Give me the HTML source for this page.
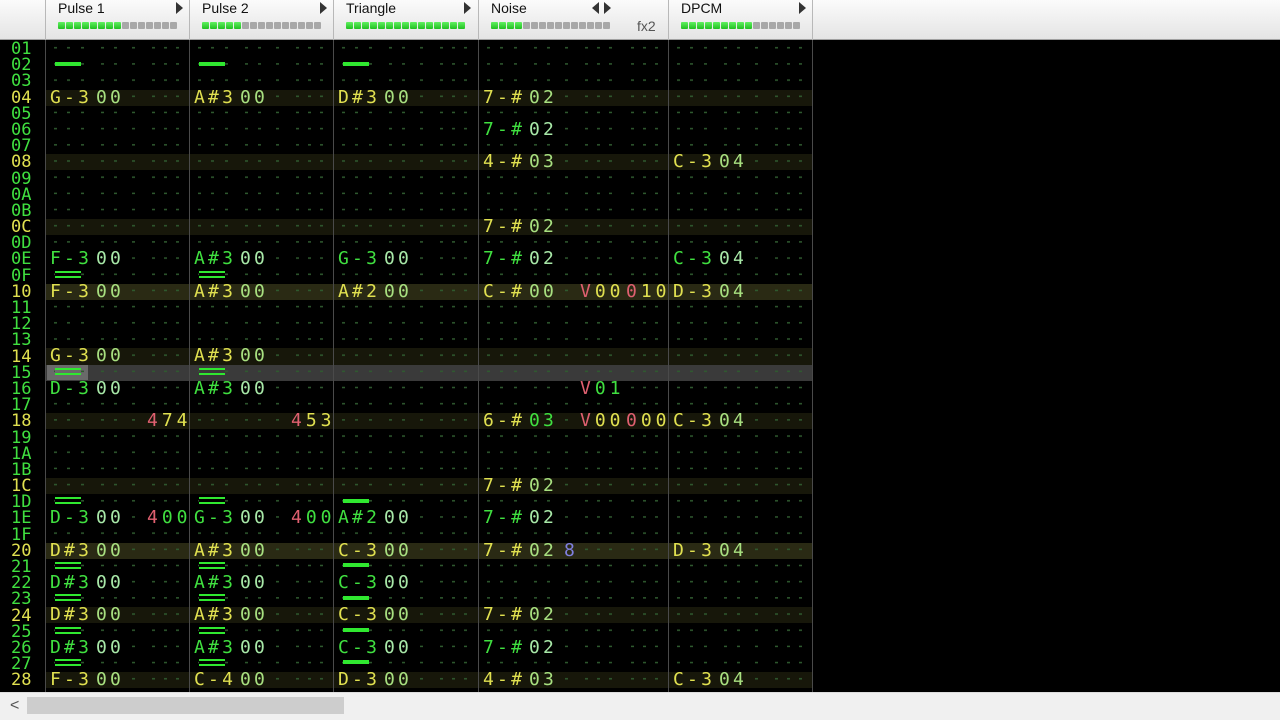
<!DOCTYPE html>
<html><head><meta charset="utf-8"><style>
*{margin:0;padding:0;box-sizing:border-box}
body{width:1280px;height:720px;background:#000;position:relative;overflow:hidden;font-family:"DejaVu Sans Mono","Liberation Mono",monospace}
#hdr{position:absolute;left:0;top:0;width:1280px;height:40px;background:linear-gradient(#fbfbfb,#e4e4e4);border-bottom:1px solid #a0a0a0}
.hc{position:absolute;top:0;height:40px;border-right:1px solid #b8b8b8;font-family:"Liberation Sans",sans-serif;font-size:14px;color:#111}
.hc .t{position:absolute;left:12px;top:0}
.hc .ar{position:absolute;top:2px;width:0;height:0;border-top:6px solid transparent;border-bottom:6px solid transparent;border-left:7px solid #333}
.hc .al{position:absolute;top:2px;width:0;height:0;border-top:6px solid transparent;border-bottom:6px solid transparent;border-right:7px solid #333}
.m{position:absolute;left:12px;top:22px;height:7px;width:120px;display:flex;gap:1px}
.m i{display:block;width:7px;height:7px;background:#a8a8a8;border-radius:1px}
.m i.g{background:linear-gradient(#60f060,#20c020)}
.sep{position:absolute;top:40px;width:1px;height:652px;background:#4a4a4a;z-index:5}
.r{position:absolute;left:45px;width:767px;height:16.18px}
.r.h{background:#17170a}.r.H{background:#2a2a14}.r.cur{background:#3a3a3a}
#lab{position:absolute;left:11px;top:41px;font-size:17px;line-height:16.18px;white-space:pre;color:#40e040;z-index:6}
#lab b{font-weight:normal;color:#e0e050}
.tx{position:absolute;left:0;width:812px;height:16.18px;z-index:4;font-size:18px;line-height:16.18px;color:#40e040}
.tx div{position:absolute;top:0;height:16.18px}
.p1{left:45px}.p2{left:189px}.tr{left:333px}.no{left:478px}.dp{left:668px}
.tx b{position:absolute;top:0;font-weight:normal;white-space:pre;letter-spacing:3.2px;background:#000;height:16.18px}
.n{left:3px;padding-left:2px;width:42px}.i{left:49px;padding-left:2px;width:30px;color:#a8e8a8}.v{left:84px;padding-left:2px;width:14px}.f{left:100px;padding-left:2px;width:44px;letter-spacing:4px!important}.g{left:146px;padding-left:2px;width:44px;letter-spacing:4px!important}
.tx.h b{background:#17170a}.tx.H b{background:#2a2a14}
.tx.h .n,.tx.H .n,.tx.h .f,.tx.H .f,.tx.h .g,.tx.H .g{color:#e0e050}
.tx.h .i,.tx.H .i{color:#a8e080}
em{font-style:normal;color:#e06070}
.s1{position:absolute;left:10px;top:4.5px;width:26px;height:4px;background:#30e830}
.s2{position:absolute;left:10px;top:3px;width:26px;height:7px;border-top:2.5px solid #30e830;border-bottom:2.5px solid #30e830;background:#000}
#sb{position:absolute;left:0;top:692px;width:1280px;height:28px;background:#f0f0f0;border-top:1px solid #ddd}
</style></head><body>
<div id="hdr">
 <div class="hc" style="left:0;width:46px"></div>
 <div class="hc" style="left:46px;width:144px"><span class="t">Pulse 1</span><span class="ar" style="left:130px"></span><div class="m"><i class="g"></i><i class="g"></i><i class="g"></i><i class="g"></i><i class="g"></i><i class="g"></i><i class="g"></i><i class="g"></i><i></i><i></i><i></i><i></i><i></i><i></i><i></i></div></div>
 <div class="hc" style="left:190px;width:144px"><span class="t">Pulse 2</span><span class="ar" style="left:130px"></span><div class="m"><i class="g"></i><i class="g"></i><i class="g"></i><i class="g"></i><i class="g"></i><i></i><i></i><i></i><i></i><i></i><i></i><i></i><i></i><i></i><i></i></div></div>
 <div class="hc" style="left:334px;width:145px"><span class="t">Triangle</span><span class="ar" style="left:130px"></span><div class="m"><i class="g"></i><i class="g"></i><i class="g"></i><i class="g"></i><i class="g"></i><i class="g"></i><i class="g"></i><i class="g"></i><i class="g"></i><i class="g"></i><i class="g"></i><i class="g"></i><i class="g"></i><i class="g"></i><i class="g"></i></div></div>
 <div class="hc" style="left:479px;width:190px"><span class="t">Noise</span><span class="al" style="left:113px"></span><span class="ar" style="left:125px"></span><span style="position:absolute;left:158px;top:18px;color:#555">fx2</span><div class="m"><i class="g"></i><i class="g"></i><i class="g"></i><i class="g"></i><i></i><i></i><i></i><i></i><i></i><i></i><i></i><i></i><i></i><i></i><i></i></div></div>
 <div class="hc" style="left:669px;width:144px"><span class="t">DPCM</span><span class="ar" style="left:130px"></span><div class="m"><i class="g"></i><i class="g"></i><i class="g"></i><i class="g"></i><i class="g"></i><i class="g"></i><i class="g"></i><i class="g"></i><i class="g"></i><i></i><i></i><i></i><i></i><i></i><i></i></div></div>
</div>

<div class="r h" style="top:89.5px"></div><div class="r h" style="top:154.3px"></div><div class="r h" style="top:219px"></div>
<div class="r H" style="top:283.7px"></div><div class="r h" style="top:348.4px"></div><div class="r h" style="top:413.1px"></div>
<div class="r h" style="top:477.9px"></div><div class="r H" style="top:542.6px"></div><div class="r h" style="top:607.3px"></div><div class="r h" style="top:672px"></div>
<div class="r cur" style="top:364.6px"></div>
<div style="position:absolute;left:47px;top:365px;width:41px;height:15px;background:#6a6a6a"></div>

<svg style="position:absolute;left:0;top:41px;z-index:3" width="812" height="651">
<defs>
<pattern id="pa" x="45" y="0" width="144" height="16.18" patternUnits="userSpaceOnUse"><g fill="#2f5a2f"><rect x="9" y="6" width="3" height="1.5"/><rect x="22" y="6" width="3" height="1.5"/><rect x="36" y="6" width="3" height="1.5"/><rect x="56" y="6" width="3" height="1.5"/><rect x="69" y="6" width="3" height="1.5"/><rect x="87" y="6" width="3" height="1.5"/><rect x="107" y="6" width="3" height="1.5"/><rect x="119" y="6" width="3" height="1.5"/><rect x="131" y="6" width="3" height="1.5"/></g></pattern>
<pattern id="pb" x="478" y="0" width="190" height="16.18" patternUnits="userSpaceOnUse"><g fill="#2f5a2f"><rect x="9" y="6" width="3" height="1.5"/><rect x="22" y="6" width="3" height="1.5"/><rect x="36" y="6" width="3" height="1.5"/><rect x="56" y="6" width="3" height="1.5"/><rect x="69" y="6" width="3" height="1.5"/><rect x="87" y="6" width="3" height="1.5"/><rect x="107" y="6" width="3" height="1.5"/><rect x="119" y="6" width="3" height="1.5"/><rect x="131" y="6" width="3" height="1.5"/><rect x="153" y="6" width="3" height="1.5"/><rect x="165" y="6" width="3" height="1.5"/><rect x="177" y="6" width="3" height="1.5"/></g></pattern>
<pattern id="pc" x="668" y="0" width="144" height="16.18" patternUnits="userSpaceOnUse"><g fill="#2f5a2f"><rect x="9" y="6" width="3" height="1.5"/><rect x="22" y="6" width="3" height="1.5"/><rect x="36" y="6" width="3" height="1.5"/><rect x="56" y="6" width="3" height="1.5"/><rect x="69" y="6" width="3" height="1.5"/><rect x="87" y="6" width="3" height="1.5"/><rect x="107" y="6" width="3" height="1.5"/><rect x="119" y="6" width="3" height="1.5"/><rect x="131" y="6" width="3" height="1.5"/></g></pattern>
</defs>
<rect x="45" y="0" width="433" height="651" fill="url(#pa)"/>
<rect x="478" y="0" width="190" height="651" fill="url(#pb)"/>
<rect x="668" y="0" width="144" height="651" fill="url(#pc)"/>
</svg>

<div class="sep" style="left:45px"></div><div class="sep" style="left:189px"></div><div class="sep" style="left:333px"></div><div class="sep" style="left:478px"></div><div class="sep" style="left:668px"></div><div class="sep" style="left:812px"></div>

<div id="lab">01
02
03
<b>04</b>
05
06
07
<b>08</b>
09
0A
0B
<b>0C</b>
0D
0E
0F
<b>10</b>
11
12
13
<b>14</b>
15
16
17
<b>18</b>
19
1A
1B
<b>1C</b>
1D
1E
1F
<b>20</b>
21
22
23
<b>24</b>
25
26
27
<b>28</b></div>

<div class="tx" style="top:57.2px"><div class="p1"><i class="s1"></i></div><div class="p2"><i class="s1"></i></div><div class="tr"><i class="s1"></i></div></div>
<div class="tx h" style="top:89.5px"><div class="p1"><b class="n">G-3</b><b class="i">00</b></div><div class="p2"><b class="n">A#3</b><b class="i">00</b></div><div class="tr"><b class="n">D#3</b><b class="i">00</b></div><div class="no"><b class="n">7-#</b><b class="i">02</b></div></div>
<div class="tx" style="top:121.9px"><div class="no"><b class="n">7-#</b><b class="i">02</b></div></div>
<div class="tx h" style="top:154.3px"><div class="no"><b class="n">4-#</b><b class="i">03</b></div><div class="dp"><b class="n">C-3</b><b class="i">04</b></div></div>
<div class="tx h" style="top:219px"><div class="no"><b class="n">7-#</b><b class="i">02</b></div></div>
<div class="tx" style="top:251.3px"><div class="p1"><b class="n">F-3</b><b class="i">00</b></div><div class="p2"><b class="n">A#3</b><b class="i">00</b></div><div class="tr"><b class="n">G-3</b><b class="i">00</b></div><div class="no"><b class="n">7-#</b><b class="i">02</b></div><div class="dp"><b class="n">C-3</b><b class="i">04</b></div></div>
<div class="tx" style="top:267.5px"><div class="p1"><i class="s2"></i></div><div class="p2"><i class="s2"></i></div></div>
<div class="tx H" style="top:283.7px"><div class="p1"><b class="n">F-3</b><b class="i">00</b></div><div class="p2"><b class="n">A#3</b><b class="i">00</b></div><div class="tr"><b class="n">A#2</b><b class="i">00</b></div><div class="no"><b class="n">C-#</b><b class="i">00</b><b class="f"><em>V</em>00</b><b class="g"><em>0</em>10</b></div><div class="dp"><b class="n">D-3</b><b class="i">04</b></div></div>
<div class="tx h" style="top:348.4px"><div class="p1"><b class="n">G-3</b><b class="i">00</b></div><div class="p2"><b class="n">A#3</b><b class="i">00</b></div></div>
<div class="tx" style="top:364.6px"><div class="p1"><i class="s2" style="background:#6a6a6a"></i></div><div class="p2"><i class="s2" style="background:#3a3a3a"></i></div></div>
<div class="tx" style="top:380.8px"><div class="p1"><b class="n">D-3</b><b class="i">00</b></div><div class="p2"><b class="n">A#3</b><b class="i">00</b></div><div class="no"><b class="f"><em>V</em>01</b></div></div>
<div class="tx h" style="top:413.1px"><div class="p1"><b class="f"><em>4</em>74</b></div><div class="p2"><b class="f"><em>4</em>53</b></div><div class="no"><b class="n">6-#</b><b class="i" style="color:#40e040">03</b><b class="f"><em>V</em>00</b><b class="g"><em>0</em>00</b></div><div class="dp"><b class="n">C-3</b><b class="i">04</b></div></div>
<div class="tx h" style="top:477.9px"><div class="no"><b class="n">7-#</b><b class="i">02</b></div></div>
<div class="tx" style="top:494px"><div class="p1"><i class="s2"></i></div><div class="p2"><i class="s2"></i></div><div class="tr"><i class="s1"></i></div></div>
<div class="tx" style="top:510.2px"><div class="p1"><b class="n">D-3</b><b class="i">00</b><b class="f"><em>4</em>00</b></div><div class="p2"><b class="n">G-3</b><b class="i">00</b><b class="f"><em>4</em>00</b></div><div class="tr"><b class="n">A#2</b><b class="i">00</b></div><div class="no"><b class="n">7-#</b><b class="i">02</b></div></div>
<div class="tx H" style="top:542.6px"><div class="p1"><b class="n">D#3</b><b class="i">00</b></div><div class="p2"><b class="n">A#3</b><b class="i">00</b></div><div class="tr"><b class="n">C-3</b><b class="i">00</b></div><div class="no"><b class="n">7-#</b><b class="i">02</b><b class="v" style="color:#8080e0">8</b></div><div class="dp"><b class="n">D-3</b><b class="i">04</b></div></div>
<div class="tx" style="top:558.8px"><div class="p1"><i class="s2"></i></div><div class="p2"><i class="s2"></i></div><div class="tr"><i class="s1"></i></div></div>
<div class="tx" style="top:574.9px"><div class="p1"><b class="n">D#3</b><b class="i">00</b></div><div class="p2"><b class="n">A#3</b><b class="i">00</b></div><div class="tr"><b class="n">C-3</b><b class="i">00</b></div></div>
<div class="tx" style="top:591.1px"><div class="p1"><i class="s2"></i></div><div class="p2"><i class="s2"></i></div><div class="tr"><i class="s1"></i></div></div>
<div class="tx h" style="top:607.3px"><div class="p1"><b class="n">D#3</b><b class="i">00</b></div><div class="p2"><b class="n">A#3</b><b class="i">00</b></div><div class="tr"><b class="n">C-3</b><b class="i">00</b></div><div class="no"><b class="n">7-#</b><b class="i">02</b></div></div>
<div class="tx" style="top:623.5px"><div class="p1"><i class="s2"></i></div><div class="p2"><i class="s2"></i></div><div class="tr"><i class="s1"></i></div></div>
<div class="tx" style="top:639.7px"><div class="p1"><b class="n">D#3</b><b class="i">00</b></div><div class="p2"><b class="n">A#3</b><b class="i">00</b></div><div class="tr"><b class="n">C-3</b><b class="i">00</b></div><div class="no"><b class="n">7-#</b><b class="i">02</b></div></div>
<div class="tx" style="top:655.8px"><div class="p1"><i class="s2"></i></div><div class="p2"><i class="s2"></i></div><div class="tr"><i class="s1"></i></div></div>
<div class="tx h" style="top:672px"><div class="p1"><b class="n">F-3</b><b class="i">00</b></div><div class="p2"><b class="n">C-4</b><b class="i">00</b></div><div class="tr"><b class="n">D-3</b><b class="i">00</b></div><div class="no"><b class="n">4-#</b><b class="i">03</b></div><div class="dp"><b class="n">C-3</b><b class="i">04</b></div></div>

<div id="sb">
 <div style="position:absolute;left:10px;top:6px;font-family:'Liberation Sans',sans-serif;font-size:16px;color:#555;line-height:14px">&lt;</div>
 <div style="position:absolute;left:27px;top:4px;width:317px;height:17px;background:#cdcdcd"></div>
</div>
</body></html>
